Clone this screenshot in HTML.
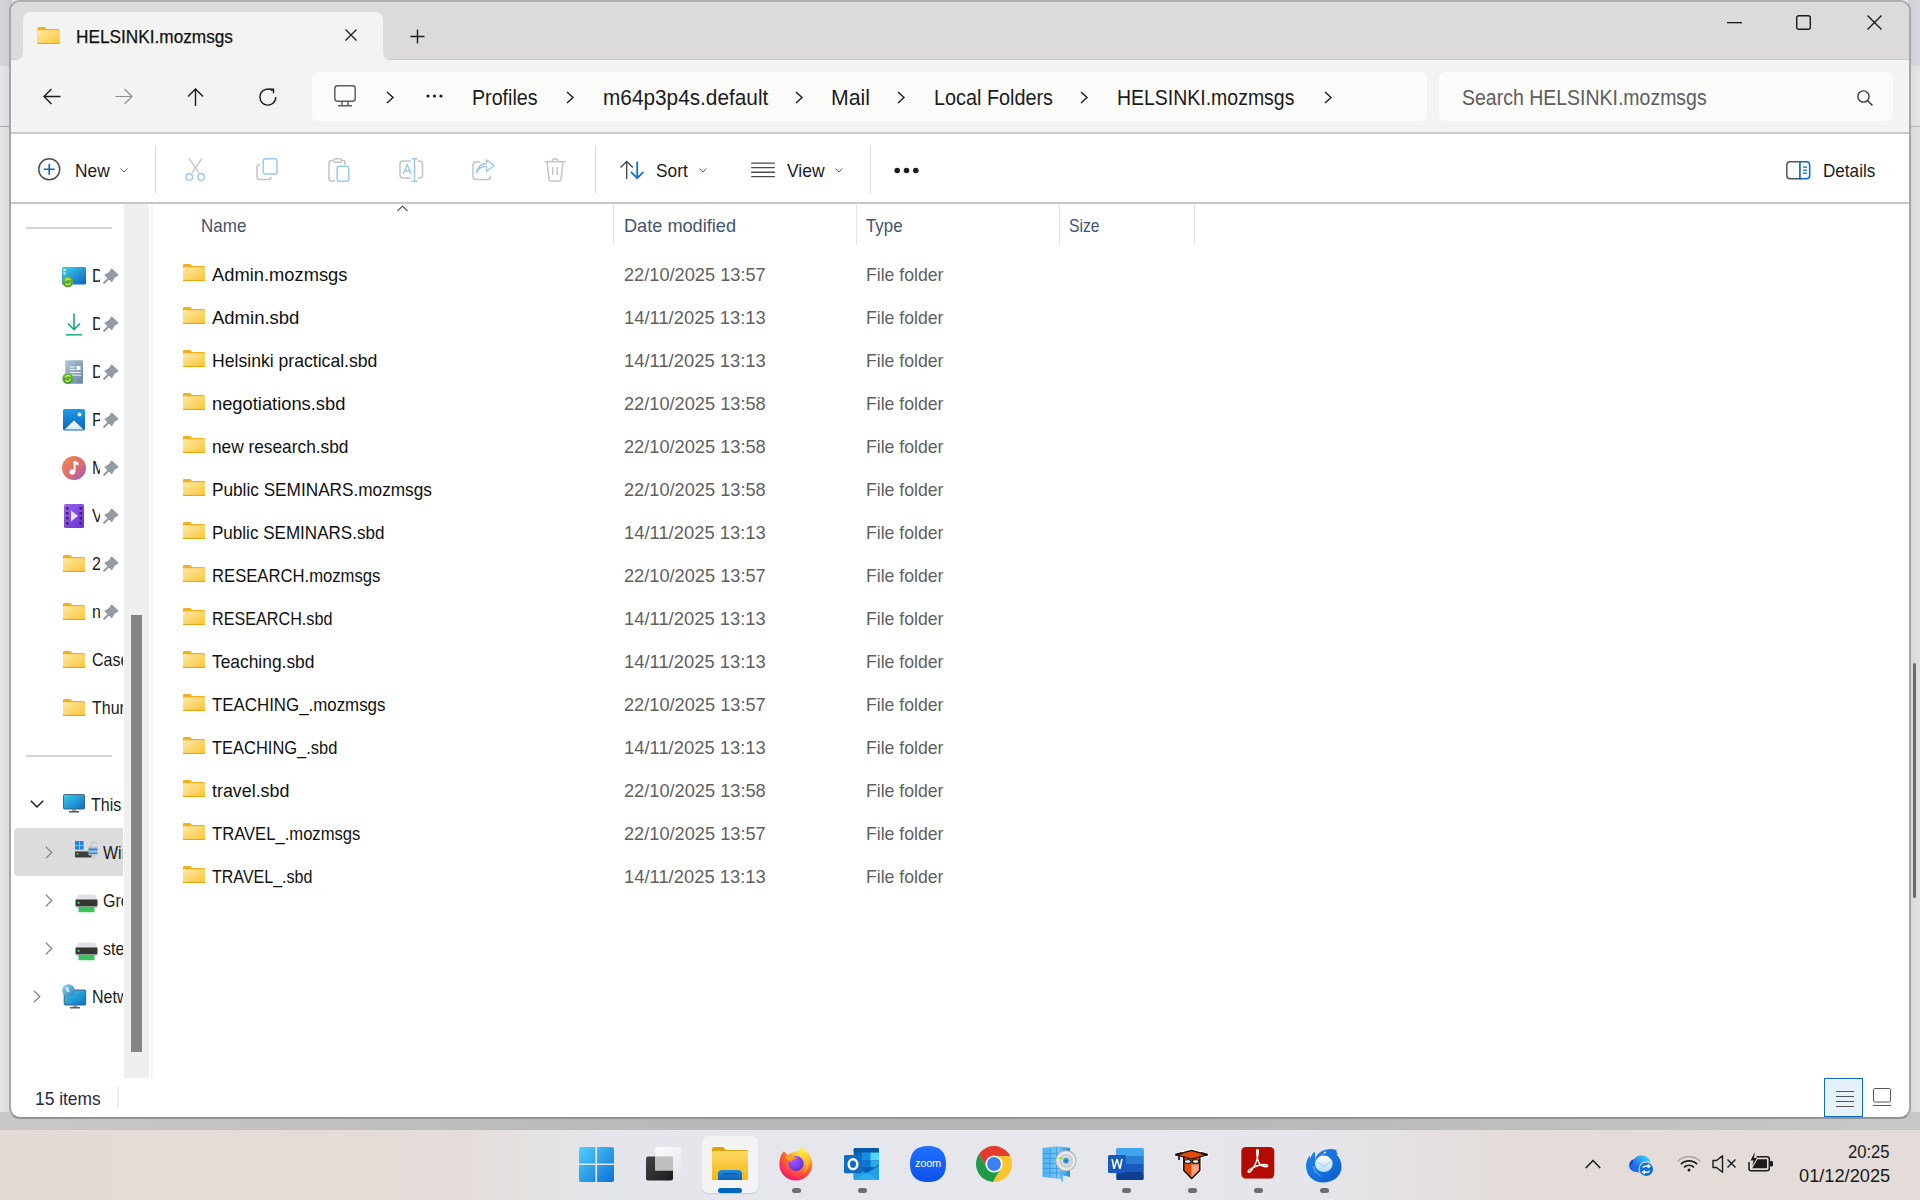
<!DOCTYPE html>
<html><head><meta charset="utf-8">
<style>
*{box-sizing:border-box;margin:0;padding:0}
html,body{width:1920px;height:1200px;overflow:hidden}
body{position:relative;font-family:"Liberation Sans",sans-serif;background:#e8e8ea;color:#1b1b1b}
.a{position:absolute}
.t{position:absolute;white-space:nowrap;line-height:1;transform-origin:0 0}
svg{position:absolute;overflow:visible}
#bgl{left:0;top:0;width:12px;height:1130px;background:linear-gradient(90deg,rgba(255,255,255,0.12),rgba(0,0,0,0.04)),linear-gradient(#d2d3d9 0,#d2d3d9 66px,#e1e2e6 66px,#e1e2e6 126px,#9f9fa3 126px,#9f9fa3 127px,#e2e2e2 127px)}
#bgr{left:1908px;top:0;width:12px;height:1130px;background:linear-gradient(90deg,rgba(0,0,0,0.04),rgba(255,255,255,0.1)),linear-gradient(#d5d6dc 0,#d5d6dc 66px,#e3e3e6 66px,#e3e3e6 126px,#b0b0b0 126px,#b0b0b0 127px,#dedede 127px)}
#bgt{display:none}
#bgb{left:0;top:1112px;width:1920px;height:18px;background:linear-gradient(90deg,#c8c8c8 0%,#bababa 30%,#b6b6b6 50%,#bababa 70%,#c8c8c8 100%)}
#win{left:9px;top:0;width:1902px;height:1119px;border-radius:11px;background:#fff;border:2px solid #a6a6a6;border-top-color:#adadb3;border-bottom-color:#939393}
#title{left:11px;top:2px;width:1898px;height:58px;background:#dcdbd9;border-radius:9px 9px 0 0;border-bottom:1px solid #c9c9c9}
#toolbar{left:11px;top:60px;width:1898px;height:74px;background:#f3f3f2;border-bottom:2px solid #cbcac7}
#tab{left:23px;top:12px;width:360px;height:49px;background:#f3f3f2;border-radius:8px 8px 0 0}
.flare{width:8px;height:8px;top:51px}
#addr{left:312px;top:72px;width:1115px;height:49px;background:#fbfbfa;border-radius:6px}
#search{left:1439px;top:72px;width:454px;height:49px;background:#fbfbfa;border-radius:6px}
#cmdline{left:11px;top:202px;width:1898px;height:2px;background:#c8c7c3}
#track{left:124px;top:204px;width:25px;height:874px;background:#efefef}
#thumb{left:131px;top:615px;width:11px;height:437px;background:#858585}
#cline{left:151px;top:204px;width:2px;height:874px;background:#f4f4f4}
.sep{width:1px;background:#dcdcdc}
.csep{width:1px;top:203px;height:42px;background:#e3e3e3}
#taskbar{left:0;top:1130px;width:1920px;height:70px;background:linear-gradient(90deg,#e4dbd6 0%,#e4dcd8 23%,#e5e6eb 32%,#e6e7ec 50%,#e5e5ea 68%,#e3dcd8 79%,#e3dcd8 100%);}
.dot{width:9px;height:5px;border-radius:3px;background:#6e6e6e;top:1188px}
</style></head>
<body>
<svg width="0" height="0" style="position:absolute"><defs>
<g id="pin"><path d="M1.2 14.8L5.8 10.2" stroke="#939ca3" stroke-width="2.2" stroke-linecap="round"/><path d="M9.6 0.9L15 6.3Q15.8 7.2 14.8 8L11.6 9.8L8.8 14.6L1.2 7.1L5.9 4.3L7.8 1.2Q8.6 0.2 9.6 0.9Z" fill="#939ca3"/></g>
<linearGradient id="fg2" x1="0" y1="0" x2="1" y2="1"><stop offset="0" stop-color="#ffe9a6"/><stop offset="1" stop-color="#fbc537"/></linearGradient>
<g id="fold"><path d="M0 1.3Q0 0 1.3 0H7.2L9.2 2H20.7Q22 2 22 3.3V15.7Q22 17 20.7 17H1.3Q0 17 0 15.7Z" fill="#f1b01c"/><rect x="0" y="3.2" width="22" height="13.8" rx="1.1" fill="url(#fg2)"/><rect x="0" y="15.9" width="22" height="1.1" fill="#eaa710"/></g>
<g id="drv"><path d="M3 0.5H20L22.5 6H0.5Z" fill="#e0e2e6"/><rect x="0.5" y="5.5" width="22" height="7" rx="1" fill="#353535"/><rect x="2.5" y="7.8" width="2" height="2" fill="#3de051"/><rect x="0.5" y="13" width="22" height="1.2" fill="#d9d9d9"/><rect x="3.5" y="12.8" width="16" height="5.5" rx="0.8" fill="#3ec45e"/></g>
</defs></svg>
<div id="bgl" class="a"></div>
<div id="bgr" class="a"></div>
<div id="bgt" class="a"></div>
<div id="bgb" class="a"></div>
<div class="a" style="left:1913px;top:663px;width:3px;height:235px;background:#6b6b6b;border-radius:2px"></div>
<div id="win" class="a"></div>
<div id="title" class="a"></div>
<div id="toolbar" class="a"></div>
<div id="tab" class="a"></div>
<!-- tab flares -->
<svg style="left:15px;top:52px" width="8" height="8"><path d="M0 8 Q8 8 8 0 V8 Z" fill="#f3f3f2"/></svg>
<svg style="left:383px;top:52px" width="8" height="8"><path d="M8 8 Q0 8 0 0 V8 Z" fill="#f3f3f2"/></svg>
<!-- tab folder icon -->
<svg style="left:37px;top:27px" width="23" height="17" viewBox="0 0 22 17"><defs><linearGradient id="fg" x1="0" y1="0" x2="1" y2="1"><stop offset="0" stop-color="#ffe9a6"/><stop offset="1" stop-color="#fbc537"/></linearGradient></defs><path d="M0 1.3Q0 0 1.3 0H7.2L9.2 2H20.7Q22 2 22 3.3V15.7Q22 17 20.7 17H1.3Q0 17 0 15.7Z" fill="#f1b01c"/><rect x="0" y="3.2" width="22" height="13.8" rx="1.1" fill="url(#fg)"/><rect x="0" y="15.9" width="22" height="1.1" fill="#eaa710"/></svg>
<!-- tab close / plus -->
<svg style="left:345px;top:29px" width="12" height="12"><path d="M0.5 0.5L11.5 11.5M11.5 0.5L0.5 11.5" stroke="#1e1e1e" stroke-width="1.3"/></svg>
<svg style="left:410px;top:29px" width="15" height="15"><path d="M7.5 0.5V14.5M0.5 7.5H14.5" stroke="#1e1e1e" stroke-width="1.4"/></svg>
<!-- window controls -->
<svg style="left:1727px;top:22px" width="15" height="2"><rect x="0" y="0" width="15" height="1.3" fill="#1b1b1b"/></svg>
<svg style="left:1796px;top:15px" width="15" height="15"><rect x="0.7" y="0.7" width="13.6" height="13.6" rx="2" fill="none" stroke="#1b1b1b" stroke-width="1.4"/></svg>
<svg style="left:1867px;top:15px" width="15" height="15"><path d="M0.5 0.5L14.5 14.5M14.5 0.5L0.5 14.5" stroke="#1b1b1b" stroke-width="1.4"/></svg>
<!-- nav arrows -->
<svg style="left:43px;top:88px" width="18" height="17"><path d="M17.5 8.5H1M8.5 1L1 8.5L8.5 16" fill="none" stroke="#1b1b1b" stroke-width="1.4"/></svg>
<svg style="left:115px;top:88px" width="18" height="17"><path d="M0.5 8.5H17M9.5 1L17 8.5L9.5 16" fill="none" stroke="#8e8e8e" stroke-width="1.2"/></svg>
<svg style="left:187px;top:88px" width="18" height="18"><path d="M8.5 18V1M1 8.5L8.5 1L16 8.5" fill="none" stroke="#1b1b1b" stroke-width="1.4"/></svg>
<svg style="left:259px;top:88px" width="18" height="18"><path d="M16.8 9A8 8 0 1 1 13.5 2.6" fill="none" stroke="#1b1b1b" stroke-width="1.4"/><path d="M10.5 1.3H14.5V5.3" fill="none" stroke="#1b1b1b" stroke-width="1.4"/></svg>
<div id="addr" class="a"></div>
<div id="search" class="a"></div>
<!-- PC icon -->
<svg style="left:334px;top:85px" width="22" height="22"><rect x="0.8" y="0.8" width="20.4" height="15.4" rx="2.6" fill="none" stroke="#5e5e5e" stroke-width="1.5"/><path d="M8 16.5V20M14 16.5V20M4 20.8H18" stroke="#5e5e5e" stroke-width="1.5"/></svg>
<!-- breadcrumb chevrons -->
<svg style="left:386px;top:91px" width="8" height="13"><path d="M1 1L7 6.5L1 12" fill="none" stroke="#1b1b1b" stroke-width="1.4"/></svg>
<svg style="left:426px;top:94px" width="17" height="4"><circle cx="2" cy="2" r="1.6" fill="#1b1b1b"/><circle cx="8.5" cy="2" r="1.6" fill="#1b1b1b"/><circle cx="15" cy="2" r="1.6" fill="#1b1b1b"/></svg>
<svg style="left:566px;top:91px" width="8" height="13"><path d="M1 1L7 6.5L1 12" fill="none" stroke="#1b1b1b" stroke-width="1.4"/></svg>
<svg style="left:795px;top:91px" width="8" height="13"><path d="M1 1L7 6.5L1 12" fill="none" stroke="#1b1b1b" stroke-width="1.4"/></svg>
<svg style="left:897px;top:91px" width="8" height="13"><path d="M1 1L7 6.5L1 12" fill="none" stroke="#1b1b1b" stroke-width="1.4"/></svg>
<svg style="left:1080px;top:91px" width="8" height="13"><path d="M1 1L7 6.5L1 12" fill="none" stroke="#1b1b1b" stroke-width="1.4"/></svg>
<svg style="left:1324px;top:91px" width="8" height="13"><path d="M1 1L7 6.5L1 12" fill="none" stroke="#1b1b1b" stroke-width="1.4"/></svg>
<!-- search icon -->
<svg style="left:1857px;top:90px" width="16" height="16"><circle cx="6.5" cy="6.5" r="5.6" fill="none" stroke="#3a3a3a" stroke-width="1.4"/><path d="M10.5 10.5L15.5 15.5" stroke="#3a3a3a" stroke-width="1.5"/></svg>
<!-- command bar -->
<svg style="left:38px;top:158px" width="23" height="23"><circle cx="11.25" cy="11.25" r="10.5" fill="none" stroke="#505050" stroke-width="1.5"/><path d="M11.25 5.8V16.7M5.8 11.25H16.7" stroke="#0f6cbd" stroke-width="1.7"/></svg>
<svg style="left:120px;top:168px" width="8" height="5"><path d="M0.5 0.5L4 4L7.5 0.5" fill="none" stroke="#5a5a5a" stroke-width="1"/></svg>
<div class="a sep" style="left:155px;top:146px;height:47px"></div>
<!-- cut -->
<svg style="left:185px;top:158px" width="21" height="24"><path d="M4 0.5L14 15M17 0.5L7 15" stroke="#bdbdbd" stroke-width="1.3" fill="none"/><circle cx="4.3" cy="19" r="3.3" fill="none" stroke="#9bc9ee" stroke-width="1.5"/><circle cx="16.2" cy="19" r="3.3" fill="none" stroke="#9bc9ee" stroke-width="1.5"/></svg>
<!-- copy -->
<svg style="left:256px;top:158px" width="22" height="23"><path d="M4 6.5Q1 6.5 1 9.5V18.5Q1 21.5 4 21.5H12.5Q15 21.5 15 19" fill="none" stroke="#c4c4c4" stroke-width="1.5"/><rect x="7.2" y="0.8" width="13.8" height="15.2" rx="2.6" fill="none" stroke="#9bc9ee" stroke-width="1.5"/></svg>
<!-- paste -->
<svg style="left:328px;top:158px" width="22" height="24"><path d="M5 2.5H3.2Q1 2.5 1 4.7V20.8Q1 23 3.2 23H7" fill="none" stroke="#c4c4c4" stroke-width="1.5"/><path d="M13 2.5H15Q17 2.5 17 4.5V7" fill="none" stroke="#c4c4c4" stroke-width="1.5"/><rect x="5.5" y="0.8" width="8" height="3.5" rx="1.7" fill="none" stroke="#c4c4c4" stroke-width="1.4"/><rect x="9.2" y="8.2" width="11.5" height="15" rx="2.2" fill="none" stroke="#9bc9ee" stroke-width="1.5"/></svg>
<!-- rename -->
<svg style="left:399px;top:158px" width="25" height="24"><path d="M12 3H4Q1 3 1 6V17Q1 20 4 20H12M19 3H20.5Q23.5 3 23.5 6V17Q23.5 20 20.5 20H19" fill="none" stroke="#c4c4c4" stroke-width="1.5"/><path d="M15.5 1V23M12.5 0.8H18.5M12.5 23.2H18.5" stroke="#9bc9ee" stroke-width="1.5"/><path d="M4.2 16L8.2 6.5L12.2 16M5.5 13H10.9" fill="none" stroke="#9bc9ee" stroke-width="1.4"/></svg>
<!-- share -->
<svg style="left:472px;top:159px" width="23" height="22"><path d="M8 3H4Q1 3 1 6V17.5Q1 20.5 4 20.5H15.5Q18.5 20.5 18.5 17.5V16.5" fill="none" stroke="#c4c4c4" stroke-width="1.5"/><path d="M4.5 14Q7 7 14.5 7.5V12.5L22 6.5L14.5 0.8V4.5Q6 5 4.5 14Z" fill="none" stroke="#9bc9ee" stroke-width="1.4" stroke-linejoin="round"/></svg>
<!-- delete -->
<svg style="left:544px;top:158px" width="22" height="24"><path d="M0.5 3.8H21.5M3 4L5 21Q5.3 23 7.3 23H14.7Q16.7 23 17 21L19 4M8 3.5Q8 0.8 11 0.8Q14 0.8 14 3.5M8.7 9V17M13.3 9V17" fill="none" stroke="#c4c4c4" stroke-width="1.5"/></svg>
<div class="a sep" style="left:595px;top:146px;height:47px"></div>
<!-- sort -->
<svg style="left:620px;top:161px" width="25" height="19"><path d="M6.7 18V0.8M0.5 6.5L6.7 0.5L12.9 6.5" fill="none" stroke="#4a4a4a" stroke-width="1.4"/><path d="M17.2 0.5V17.5M11 10.8L17.2 17.2L23.4 10.8" fill="none" stroke="#0f74d0" stroke-width="1.8"/></svg>
<svg style="left:699px;top:168px" width="8" height="5"><path d="M0.5 0.5L4 4L7.5 0.5" fill="none" stroke="#5a5a5a" stroke-width="1"/></svg>
<!-- view -->
<svg style="left:751px;top:161px" width="24" height="17"><path d="M0.7 2.1H23.3M0.7 6.6H23.3M0.7 11.2H23.3M0.7 15.6H23.3" stroke="#4a4a4a" stroke-width="1.4" stroke-linecap="round"/></svg>
<svg style="left:835px;top:168px" width="8" height="5"><path d="M0.5 0.5L4 4L7.5 0.5" fill="none" stroke="#5a5a5a" stroke-width="1"/></svg>
<div class="a sep" style="left:870px;top:146px;height:47px"></div>
<svg style="left:894px;top:167px" width="26" height="7"><circle cx="3.2" cy="3.5" r="2.8" fill="#1b1b1b"/><circle cx="12.5" cy="3.5" r="2.8" fill="#1b1b1b"/><circle cx="21.8" cy="3.5" r="2.8" fill="#1b1b1b"/></svg>
<!-- details icon -->
<svg style="left:1786px;top:161px" width="25" height="19"><path d="M14 0.8H4Q0.8 0.8 0.8 4V14.5Q0.8 17.7 4 17.7H14Z" fill="#fafafa" stroke="#555" stroke-width="1.5"/><path d="M14 0.8H20.5Q23.7 0.8 23.7 4V14.5Q23.7 17.7 20.5 17.7H14Z" fill="#fafafa" stroke="#0f6cbd" stroke-width="1.5"/><path d="M17 6.2H21M17 9.2H21M17 12.2H21" stroke="#0f6cbd" stroke-width="1.3"/></svg>
<div id="cmdline" class="a"></div>

<!-- NAV PANE -->
<div class="a" style="left:26px;top:227px;width:86px;height:2px;background:#d6d6d6"></div>
<div class="a" style="left:26px;top:755px;width:86px;height:2px;background:#d6d6d6"></div>
<div id="track" class="a"></div>
<div id="thumb" class="a"></div>
<div id="cline" class="a"></div>
<!-- desktop icon -->
<svg style="left:62px;top:267px" width="24" height="19"><defs><linearGradient id="dk" x1="0" y1="0" x2="1" y2="1"><stop offset="0" stop-color="#3fd0e8"/><stop offset="1" stop-color="#0b62c4"/></linearGradient><linearGradient id="sy" x1="0" y1="0" x2="0" y2="1"><stop offset="0" stop-color="#6cc04a"/><stop offset="1" stop-color="#3f9a3a"/></linearGradient></defs><rect x="0" y="0" width="24" height="17.5" rx="1.5" fill="url(#dk)"/><rect x="1.6" y="2" width="2" height="2" fill="#fff"/><rect x="1.6" y="5.5" width="2" height="2" fill="#fff"/><circle cx="5.8" cy="14.8" r="5.5" fill="url(#sy)"/><path d="M3.5 14A2.5 2.5 0 0 1 8 13M8.2 15.6A2.5 2.5 0 0 1 3.6 16.6" stroke="#f3e23c" stroke-width="1.3" fill="none"/></svg>
<!-- downloads -->
<svg style="left:66px;top:313px" width="17" height="23"><path d="M8 0.5V16.5M2 10.5L8 16.5L14 10.5" fill="none" stroke="#1aa38a" stroke-width="1.6"/><rect x="0" y="21" width="16" height="1.6" fill="#22b48c"/></svg>
<!-- documents -->
<svg style="left:62px;top:360px" width="24" height="25"><defs><linearGradient id="dc" x1="0" y1="0" x2="1" y2="1"><stop offset="0" stop-color="#b3c4d8"/><stop offset="1" stop-color="#6886a8"/></linearGradient></defs><rect x="3.2" y="0.3" width="17.8" height="23.5" rx="1.3" fill="url(#dc)"/><path d="M8 7H13M8 9.5H13M8 12.5H19M8 15.2H19" stroke="#fff" stroke-width="0.9"/><rect x="14.5" y="6" width="4" height="4" fill="#fff"/><circle cx="5.8" cy="18.4" r="5.5" fill="url(#sy)"/><path d="M3.5 17.6A2.5 2.5 0 0 1 8 16.6M8.2 19.2A2.5 2.5 0 0 1 3.6 20.2" stroke="#f3e23c" stroke-width="1.3" fill="none"/></svg>
<!-- pictures -->
<svg style="left:63px;top:409px" width="23" height="22"><defs><linearGradient id="pc" x1="0" y1="0" x2="0" y2="1"><stop offset="0" stop-color="#1f9ae6"/><stop offset="1" stop-color="#0c63bb"/></linearGradient><linearGradient id="pm" x1="0" y1="0" x2="0" y2="1"><stop offset="0" stop-color="#ffffff"/><stop offset="1" stop-color="#d5e9f9"/></linearGradient></defs><rect x="0" y="0" width="22" height="21.5" rx="1.8" fill="url(#pc)"/><path d="M1.5 20.5L11 11.5L20.5 20.5Z" fill="url(#pm)"/><circle cx="16.5" cy="5.5" r="1.9" fill="#fff"/></svg>
<!-- music -->
<svg style="left:62px;top:456px" width="24" height="24"><defs><linearGradient id="mu" x1="0" y1="0" x2="1" y2="1"><stop offset="0" stop-color="#f28c49"/><stop offset="0.55" stop-color="#dc6b72"/><stop offset="1" stop-color="#9a5bc7"/></linearGradient></defs><circle cx="12" cy="12" r="12" fill="url(#mu)"/><path d="M12.6 5V15.5" stroke="#fff" stroke-width="2"/><path d="M12.6 5L16.5 6.5V9.5L12.6 8Z" fill="#fff"/><circle cx="10.2" cy="16" r="2.8" fill="#fff"/></svg>
<!-- videos -->
<svg style="left:64px;top:504px" width="20" height="24"><defs><linearGradient id="vi" x1="0" y1="0" x2="1" y2="1"><stop offset="0" stop-color="#9c63ec"/><stop offset="1" stop-color="#6a31d2"/></linearGradient></defs><rect x="0" y="0" width="20" height="24" rx="1.5" fill="url(#vi)"/><g fill="#3c2270"><rect x="2" y="3" width="2.5" height="2.5"/><rect x="2" y="8" width="2.5" height="2.5"/><rect x="2" y="13" width="2.5" height="2.5"/><rect x="2" y="18" width="2.5" height="2.5"/><rect x="15.5" y="3" width="2.5" height="2.5"/><rect x="15.5" y="8" width="2.5" height="2.5"/><rect x="15.5" y="13" width="2.5" height="2.5"/><rect x="15.5" y="18" width="2.5" height="2.5"/></g><path d="M7 6.5L14 12L7 17.5Z" fill="#e6e0f2"/></svg>
<!-- pins -->
<svg style="left:103px;top:268px" width="16" height="16"><use href="#pin"/></svg>

<!-- more pins -->
<svg style="left:103px;top:316px" width="16" height="16"><use href="#pin"/></svg>
<svg style="left:103px;top:364px" width="16" height="16"><use href="#pin"/></svg>
<svg style="left:103px;top:412px" width="16" height="16"><use href="#pin"/></svg>
<svg style="left:103px;top:460px" width="16" height="16"><use href="#pin"/></svg>
<svg style="left:103px;top:508px" width="16" height="16"><use href="#pin"/></svg>
<svg style="left:103px;top:556px" width="16" height="16"><use href="#pin"/></svg>
<svg style="left:103px;top:604px" width="16" height="16"><use href="#pin"/></svg>
<!-- nav folders -->
<svg style="left:63px;top:555px" width="22" height="17"><use href="#fold"/></svg>
<svg style="left:63px;top:603px" width="22" height="17"><use href="#fold"/></svg>
<svg style="left:63px;top:651px" width="22" height="17"><use href="#fold"/></svg>
<svg style="left:63px;top:699px" width="22" height="17"><use href="#fold"/></svg>
<!-- This PC -->
<svg style="left:30px;top:800px" width="14" height="8"><path d="M0.8 0.8L7 7L13.2 0.8" fill="none" stroke="#1b1b1b" stroke-width="1.4"/></svg>
<svg style="left:63px;top:794px" width="22" height="19"><defs><linearGradient id="mon" x1="0" y1="0" x2="1" y2="1"><stop offset="0" stop-color="#3ad0e6"/><stop offset="1" stop-color="#0d6bc7"/></linearGradient></defs><rect x="0.5" y="0.5" width="21" height="14.5" rx="1" fill="url(#mon)" stroke="#3f5a70" stroke-width="0.9"/><rect x="9" y="15" width="4" height="2" fill="#8a9aa6"/><rect x="6" y="17" width="10" height="1.6" fill="#56646e"/></svg>
<div class="a" style="left:14px;top:828px;width:109px;height:48px;background:#dcdcdc;border-radius:4px 0 0 4px"></div>
<svg style="left:45px;top:846px" width="8" height="13"><path d="M0.8 0.8L6.8 6.5L0.8 12.2" fill="none" stroke="#888" stroke-width="1.3"/></svg>
<svg style="left:45px;top:894px" width="8" height="13"><path d="M0.8 0.8L6.8 6.5L0.8 12.2" fill="none" stroke="#888" stroke-width="1.3"/></svg>
<svg style="left:45px;top:942px" width="8" height="13"><path d="M0.8 0.8L6.8 6.5L0.8 12.2" fill="none" stroke="#888" stroke-width="1.3"/></svg>
<svg style="left:33px;top:990px" width="8" height="13"><path d="M0.8 0.8L6.8 6.5L0.8 12.2" fill="none" stroke="#888" stroke-width="1.3"/></svg>
<!-- windows drive -->
<svg style="left:75px;top:841px" width="23" height="19"><g fill="#1e86de"><rect x="0" y="0" width="4" height="4"/><rect x="4.6" y="0" width="4" height="4"/><rect x="0" y="4.6" width="4" height="4"/><rect x="4.6" y="4.6" width="4" height="4"/></g><rect x="0" y="10" width="17" height="6.5" rx="0.8" fill="#3d3d3d"/><rect x="0" y="9" width="17" height="1.4" fill="#d8d8d8"/><rect x="1.6" y="12" width="1.8" height="1.8" fill="#34e04a"/><path d="M16 6V3.8A2.8 2.8 0 0 1 21.6 3.8" fill="none" stroke="#b8c6d2" stroke-width="1.2"/><rect x="13.5" y="5.5" width="9" height="9" rx="1" fill="#b9c1c8"/><rect x="13.5" y="7.5" width="9" height="2" fill="#2a8ae0"/><rect x="13.5" y="11.5" width="9" height="1.5" fill="#2a8ae0"/><ellipse cx="18" cy="16.5" rx="2.5" ry="1.6" fill="#c9d0d6"/></svg>
<!-- network drives -->
<svg style="left:75px;top:894px" width="23" height="19"><use href="#drv"/></svg>
<svg style="left:75px;top:942px" width="23" height="19"><use href="#drv"/></svg>
<!-- network -->
<svg style="left:62px;top:984px" width="25" height="25"><defs><linearGradient id="gl" x1="0" y1="0" x2="1" y2="1"><stop offset="0" stop-color="#8fd2f4"/><stop offset="1" stop-color="#2f7fb8"/></linearGradient></defs><rect x="2.2" y="6" width="21.5" height="15" rx="0.8" fill="url(#mon)" stroke="#3f5a70" stroke-width="0.9"/><rect x="11" y="21" width="4" height="2" fill="#8a9aa6"/><rect x="8" y="23" width="10" height="1.5" fill="#56646e"/><circle cx="6.5" cy="6.5" r="6.3" fill="url(#gl)"/><path d="M3 4Q5 2 7 4Q6 6 8 7Q7 9 5 8Z" fill="#d8f0fb" opacity="0.8"/></svg>
<!-- row folders -->
<svg style="left:183px;top:264px" width="22" height="17"><use href="#fold"/></svg>
<svg style="left:183px;top:307px" width="22" height="17"><use href="#fold"/></svg>
<svg style="left:183px;top:350px" width="22" height="17"><use href="#fold"/></svg>
<svg style="left:183px;top:393px" width="22" height="17"><use href="#fold"/></svg>
<svg style="left:183px;top:436px" width="22" height="17"><use href="#fold"/></svg>
<svg style="left:183px;top:479px" width="22" height="17"><use href="#fold"/></svg>
<svg style="left:183px;top:522px" width="22" height="17"><use href="#fold"/></svg>
<svg style="left:183px;top:565px" width="22" height="17"><use href="#fold"/></svg>
<svg style="left:183px;top:608px" width="22" height="17"><use href="#fold"/></svg>
<svg style="left:183px;top:651px" width="22" height="17"><use href="#fold"/></svg>
<svg style="left:183px;top:694px" width="22" height="17"><use href="#fold"/></svg>
<svg style="left:183px;top:737px" width="22" height="17"><use href="#fold"/></svg>
<svg style="left:183px;top:780px" width="22" height="17"><use href="#fold"/></svg>
<svg style="left:183px;top:823px" width="22" height="17"><use href="#fold"/></svg>
<svg style="left:183px;top:866px" width="22" height="17"><use href="#fold"/></svg>
<!-- column header -->
<svg style="left:397px;top:205px" width="11" height="7"><path d="M0.5 6L5.5 1L10.5 6" fill="none" stroke="#5a5a5a" stroke-width="1.1"/></svg>
<div class="a csep" style="left:613px"></div>
<div class="a csep" style="left:856px"></div>
<div class="a csep" style="left:1059px"></div>
<div class="a csep" style="left:1194px"></div>
<!-- status -->
<div class="a" style="left:117px;top:1087px;width:2px;height:21px;background:#efefef"></div>
<div class="a" style="left:1824px;top:1078px;width:39px;height:39px;background:#e5f1fb;border:1.5px solid #0f6cbd"></div>
<svg style="left:1836px;top:1090px" width="18" height="18"><path d="M0 1.5H18M0 6.5H18M0 11.5H18M0 16.5H18" stroke="#555" stroke-width="1"/></svg>
<svg style="left:1873px;top:1088px" width="19" height="18"><rect x="0.5" y="0.5" width="17" height="13.5" rx="1.2" fill="none" stroke="#555" stroke-width="1"/><path d="M0 17.5H18" stroke="#555" stroke-width="1"/></svg>
<!-- TASKBAR -->
<div id="taskbar" class="a"></div>
<!-- start -->
<svg style="left:579px;top:1147px" width="35" height="35"><defs><linearGradient id="st" x1="0" y1="0" x2="1" y2="1"><stop offset="0" stop-color="#52d0fb"/><stop offset="1" stop-color="#0a6fd6"/></linearGradient></defs><path d="M0 2Q0 0 2 0H16.4V16.4H0ZM18.1 0H33Q35 0 35 2V16.4H18.1ZM0 18.1H16.4V35H2Q0 35 0 33ZM18.1 18.1H35V33Q35 35 33 35H18.1Z" fill="url(#st)"/></svg>
<!-- task view -->
<svg style="left:646px;top:1147px" width="36" height="34"><defs><linearGradient id="tv1" x1="0" y1="0" x2="1" y2="1"><stop offset="0" stop-color="#444"/><stop offset="1" stop-color="#1b1b1b"/></linearGradient><linearGradient id="tv2" x1="0" y1="0" x2="1" y2="1"><stop offset="0" stop-color="#ffffff"/><stop offset="1" stop-color="#e9e9e9"/></linearGradient></defs><rect x="0" y="9.5" width="27" height="24" rx="2" fill="url(#tv1)"/><rect x="9" y="0" width="26.5" height="23.5" rx="1.5" fill="url(#tv2)" opacity="0.85"/><rect x="9" y="9.5" width="18" height="14" fill="#bdbdbd" opacity="0.9"/></svg>
<!-- explorer active -->
<div class="a" style="left:702px;top:1136px;width:56px;height:57px;background:#f3f3f3;border-radius:6px;box-shadow:0 1px 1px rgba(0,0,0,0.12)"></div>
<svg style="left:712px;top:1147px" width="36" height="34"><defs><linearGradient id="ef" x1="0" y1="0" x2="0" y2="1"><stop offset="0" stop-color="#ffd963"/><stop offset="1" stop-color="#f5b614"/></linearGradient><linearGradient id="ed" x1="0" y1="0" x2="0" y2="1"><stop offset="0" stop-color="#1b8ee6"/><stop offset="1" stop-color="#0b5fb8"/></linearGradient></defs><path d="M0 2Q0 0 2 0H11L14 3H34Q36 3 36 5V31Q36 33 34 33H2Q0 33 0 31Z" fill="#dfa20a"/><rect x="0" y="4" width="36" height="29" rx="1.5" fill="url(#ef)"/><path d="M6 33V27Q6 23 10 23H26Q30 23 30 27V33Z" fill="url(#ed)"/><rect x="11" y="26.2" width="14" height="1.2" fill="#0b4d91"/></svg>
<div class="a" style="left:718px;top:1188px;width:24px;height:5px;border-radius:3px;background:#0067c0"></div>
<!-- firefox -->
<svg style="left:779px;top:1146px" width="34" height="35"><defs><radialGradient id="ff1" cx="0.72" cy="0.12" r="0.95"><stop offset="0" stop-color="#fff44f"/><stop offset="0.35" stop-color="#ffbd2e"/><stop offset="0.6" stop-color="#ff6a2a"/><stop offset="0.85" stop-color="#ff3350"/><stop offset="1" stop-color="#e3197e"/></radialGradient><radialGradient id="ff2" cx="0.35" cy="0.3" r="0.8"><stop offset="0" stop-color="#a659ff"/><stop offset="0.6" stop-color="#7b3cf0"/><stop offset="1" stop-color="#5a2bc4"/></radialGradient></defs><path d="M4.5 5.5C2 8.5 0.3 13 0.3 18C0.3 27 7.5 34.5 16.8 34.5C26 34.5 33.3 27 33.3 18C33.3 11.5 29.5 6 24.5 3C23.5 2 23 1 22.5 0C21.5 3 19.5 5 16.5 5.6C13 6.3 10.5 7.8 8.5 9.8C8 8 6.8 6.5 4.5 5.5Z" fill="url(#ff1)"/><circle cx="17" cy="17.5" r="7.6" fill="url(#ff2)"/><path d="M5.5 11.5Q10 8.8 15 11Q17.5 12 19.5 11Q17 13.5 13.5 13.8Q12.2 14.8 12.4 16.2Q8.5 15 5.5 11.5Z" fill="#ff9f1c"/><path d="M22 5.5Q29.5 9 29.8 17.5Q29.5 25.5 22 28.5Q27.3 24 27.2 17.5Q27 10.5 22 5.5Z" fill="#ffd23a" opacity="0.55"/></svg>
<div class="a dot" style="left:792px"></div>
<!-- outlook -->
<svg style="left:844px;top:1148px" width="36" height="33"><rect x="9.7" y="0" width="25.3" height="32" rx="1.6" fill="#0a64b8"/><rect x="9.7" y="0" width="25.3" height="4.6" rx="1.5" fill="#0358a7"/><rect x="18" y="4.6" width="8.5" height="7.6" fill="#1a8ee0"/><rect x="26.5" y="4.6" width="8.5" height="7.6" fill="#50d9ff"/><rect x="9.7" y="12.2" width="8.3" height="7" fill="#0a64b8"/><rect x="18" y="12.2" width="8.5" height="7" fill="#0f78d4"/><rect x="26.5" y="12.2" width="8.5" height="7" fill="#28a8ea"/><path d="M18 19L22.5 24L35 16.5V19Z" fill="#0a5cb0"/><path d="M9.7 17.5L22.3 25.5L35 17.5V30.4Q35 32 33.4 32H11.3Q9.7 32 9.7 30.4Z" fill="#1f9fe8"/><path d="M9.7 32L22.3 25L35 32Z" fill="#35b1f0" opacity="0.7"/><rect x="0" y="7" width="18" height="18.3" rx="1.6" fill="#0e6cc4"/><ellipse cx="9" cy="16.2" rx="4.3" ry="4.9" fill="none" stroke="#fff" stroke-width="2.5"/></svg>
<div class="a dot" style="left:858px"></div>
<!-- zoom -->
<svg style="left:910px;top:1146px" width="36" height="36"><defs><linearGradient id="zm" x1="0" y1="0" x2="0" y2="1"><stop offset="0" stop-color="#2170ff"/><stop offset="1" stop-color="#0b50e8"/></linearGradient></defs><path d="M18 0C30 0 36 6 36 18C36 30 30 36 18 36C6 36 0 30 0 18C0 6 6 0 18 0Z" fill="url(#zm)"/><text x="18" y="21.3" text-anchor="middle" font-family="Liberation Sans" font-size="11" fill="#fff" letter-spacing="-0.2">zoom</text></svg>
<!-- chrome -->
<svg style="left:976px;top:1146px" width="36" height="36" viewBox="0 0 36 36"><path d="M18 10L34.12 10A18 18 0 0 0 3.01 8.04L11.07 22Z" fill="#e33b2e"/><path d="M24.93 22L16.87 35.96A18 18 0 0 0 34.12 10L18 10Z" fill="#fcc52f"/><path d="M11.07 22L3.01 8.04A18 18 0 0 0 16.87 35.96L24.93 22Z" fill="#1e9a49"/><circle cx="18" cy="18" r="8.6" fill="#fff"/><circle cx="18" cy="18" r="6.9" fill="#3b7ff0"/></svg>
<!-- install disc -->
<svg style="left:1042px;top:1146px" width="36" height="36"><defs><linearGradient id="bl" x1="0" y1="0" x2="1" y2="0"><stop offset="0" stop-color="#4fb0ee"/><stop offset="0.6" stop-color="#77c6f6"/><stop offset="1" stop-color="#1d8fe0"/></linearGradient><radialGradient id="cd" cx="0.5" cy="0.5" r="0.5"><stop offset="0" stop-color="#fff"/><stop offset="0.28" stop-color="#e8e8e8"/><stop offset="0.55" stop-color="#c9c9c9"/><stop offset="0.8" stop-color="#f2f2f2"/><stop offset="1" stop-color="#a3a3a3"/></radialGradient></defs><path d="M0.5 2L16 0.3L28 2V31L21 29.5V35.8L19.5 35.8V33L0.5 31Z" fill="url(#bl)"/><path d="M1.5 7.5H20M1.5 12.5H20M1.5 17.5H20M1.5 22.5H20M1.5 27H20M8 2V31M14.5 1V32" stroke="#1f86d9" stroke-width="0.7" opacity="0.8"/><circle cx="24" cy="14.8" r="10.6" fill="url(#cd)"/><circle cx="24" cy="14.8" r="3" fill="#3d9ad8"/><circle cx="24" cy="14.8" r="1.2" fill="#1170c0"/><path d="M14.5 12L20.5 13.5L21 11.5Z" fill="#8fe83a"/></svg>
<!-- word -->
<svg style="left:1108px;top:1148px" width="36" height="32"><rect x="8.5" y="0" width="27" height="32" rx="1.5" fill="#185abd"/><rect x="8.5" y="0" width="27" height="8" rx="1.5" fill="#41a5ee"/><rect x="8.5" y="8" width="27" height="8" fill="#2b7cd3"/><rect x="8.5" y="16" width="27" height="8" fill="#185abd"/><rect x="8.5" y="24" width="27" height="8" rx="1.5" fill="#103f91"/><rect x="0" y="7" width="18" height="18" rx="1.5" fill="#185abd"/><path d="M3.3 11L5.3 21H6.8L9 13.8L11.2 21H12.7L14.7 11H13.1L11.8 18L9.8 11H8.2L6.2 18L4.9 11Z" fill="#fff"/></svg>
<div class="a dot" style="left:1122px"></div>
<!-- owl shield -->
<svg style="left:1174px;top:1149px" width="35" height="32"><g stroke="#fff" stroke-width="3" stroke-linejoin="round" fill="#fff"><path d="M1.5 5.8L17.5 1.3L33.5 5.8L26.5 7.6V21L17.5 30L9.8 21V7.6Z"/></g><path d="M9.8 8V21.5L17.5 29.6L25.8 21.5V8Z" fill="#e5480b" stroke="#111" stroke-width="1.5" stroke-linejoin="round"/><path d="M17.5 15.5V28.5L24.8 21V15.5Z" fill="#f3a586"/><path d="M1.5 5.8L17.5 1.3L33.5 5.8L17.5 10Z" fill="#e5480b" stroke="#111" stroke-width="1.2" stroke-linejoin="round"/><path d="M1.5 5.8L8 4M33.5 5.8L27 4" stroke="#111" stroke-width="2"/><path d="M5 6.5V11" stroke="#111" stroke-width="1.6"/><ellipse cx="13.6" cy="12.5" rx="3.4" ry="1.8" fill="#fff" stroke="#111" stroke-width="1.1"/><ellipse cx="21.6" cy="12.5" rx="3.4" ry="1.8" fill="#fff" stroke="#111" stroke-width="1.1"/></svg>
<div class="a dot" style="left:1188px"></div>
<!-- acrobat -->
<svg style="left:1241px;top:1147px" width="34" height="33"><rect x="0.3" y="0" width="33" height="31.5" rx="4.5" fill="#b30b00"/><rect x="0.3" y="31" width="33" height="1.2" rx="0.6" fill="#000" opacity="0.08"/><g fill="none" stroke="#fff" stroke-width="1.4" stroke-linejoin="round"><path d="M15.8 5.8Q15.5 2.5 16.5 2.5Q17.6 2.5 17.2 6.5Q16.8 10 15.2 15Q13 20 10.5 23.5Q8.5 26 7.2 25Q6.5 24 9.5 22Q13 19.5 19 18Q24 17 26 18Q27.5 19.2 26 19.6Q24 20 20.5 18.5Q17.5 16.5 16.3 11Q15.9 8 15.8 5.8Z"/></g></svg>
<div class="a dot" style="left:1254px"></div>
<!-- thunderbird -->
<svg style="left:1305px;top:1147px" width="38" height="36"><defs><linearGradient id="tb" x1="0" y1="0" x2="1" y2="1"><stop offset="0" stop-color="#1f86ea"/><stop offset="1" stop-color="#0b5ccc"/></linearGradient><linearGradient id="tbe" x1="0" y1="0" x2="0" y2="1"><stop offset="0" stop-color="#ffffff"/><stop offset="1" stop-color="#b3dcfb"/></linearGradient></defs><path d="M18 35.5C8 35.5 1 28 1 19C1 14 3 10.5 5 8.5L5.5 12C6 9 7.5 6 9.5 4.5C10.5 8 10.5 11 10 13C11.5 8 14 5 18 3.5C22 2 26 1.5 30 2.5L32 3.5L31 5L33 6.5L31.5 7.5C35 11 36.5 15 36.5 20C36.5 29 28.5 35.5 18 35.5Z" fill="url(#tb)"/><path d="M13 13Q15 7 21 5Q17 9 15 12Z" fill="#9a7df0" opacity="0.8"/><ellipse cx="18.8" cy="16.8" rx="8.8" ry="8.3" fill="url(#tbe)"/><path d="M11 14L18.8 19.5L26.5 14" fill="none" stroke="#a9cdee" stroke-width="1"/><circle cx="19.8" cy="5.5" r="0.9" fill="#fff"/><path d="M7 19Q8.5 28 18 30Q11 27 10 19Z" fill="#5fa8f5" opacity="0.6"/></svg>
<div class="a dot" style="left:1320px"></div>
<!-- tray -->
<svg style="left:1585px;top:1159px" width="16" height="10"><path d="M0.8 9L8 1.5L15.2 9" fill="none" stroke="#1b1b1b" stroke-width="1.5"/></svg>
<svg style="left:1628px;top:1154px" width="28" height="24"><defs><linearGradient id="od" x1="0.1" y1="0.9" x2="0.9" y2="0.1"><stop offset="0" stop-color="#1b5fe6"/><stop offset="0.5" stop-color="#2a93f6"/><stop offset="1" stop-color="#29d3ef"/></linearGradient></defs><circle cx="7.5" cy="11.3" r="6.4" fill="#1a46cc"/><circle cx="13.6" cy="10.2" r="9" fill="url(#od)"/><path d="M2 13Q4 17.5 8 17.5H13V11H2Z" fill="#1f6ae6"/><circle cx="18.3" cy="15.2" r="7.3" fill="#0f70d8" stroke="#e4ddd9" stroke-width="1.1"/><path d="M14.8 13.4Q17 11.6 20.5 12.2M19.8 10.6L21.8 12.3L19.7 13.8M21.8 17Q19.6 18.8 16.1 18.2M16.8 19.8L14.8 18.1L16.9 16.6" fill="none" stroke="#fff" stroke-width="1.5"/></svg>
<svg style="left:1677px;top:1155px" width="24" height="17"><path d="M0.6 6.3A16 16 0 0 1 23.4 6.3" fill="none" stroke="#9a9a9a" stroke-width="1.2"/><path d="M3.8 9.3A11.5 11.5 0 0 1 20.2 9.3M7 12.4A6.8 6.8 0 0 1 17 12.4" fill="none" stroke="#1b1b1b" stroke-width="1.6"/><circle cx="12" cy="15" r="1.5" fill="#1b1b1b"/></svg>
<svg style="left:1712px;top:1155px" width="25" height="18"><path d="M1 5.5H4.5L10.5 0.8V17.2L4.5 12.5H1Z" fill="none" stroke="#1b1b1b" stroke-width="1.4" stroke-linejoin="round"/><path d="M15.5 4.5L23.5 12.5M23.5 4.5L15.5 12.5" stroke="#1b1b1b" stroke-width="1.4"/></svg>
<svg style="left:1748px;top:1152px" width="26" height="20"><path d="M8.5 4.8H19Q21.3 4.8 21.3 7.1V16.4Q21.3 18.7 19 18.7H3.3Q1 18.7 1 16.4V10" fill="none" stroke="#1b1b1b" stroke-width="1.5"/><rect x="21.8" y="9" width="3.2" height="5.5" rx="1.2" fill="#1b1b1b"/><path d="M9.5 7.2H19V16.3H4.2Z" fill="#1b1b1b"/><path d="M6.8 0L2.6 8.6H5.6L4.2 14L9 6H6Z" fill="#1b1b1b"/></svg>
<div class="t" style="left:76.40px;top:27.89px;font-size:18.8px;color:#111111;transform:scaleX(0.9172);-webkit-text-stroke:0.25px #111111;">HELSINKI.mozmsgs</div>
<div class="t" style="left:472.40px;top:86.65px;font-size:21.2px;color:#1b1b1b;transform:scaleX(0.9284);">Profiles</div>
<div class="t" style="left:602.50px;top:86.65px;font-size:21.2px;color:#1b1b1b;transform:scaleX(0.9813);">m64p3p4s.default</div>
<div class="t" style="left:831.30px;top:86.65px;font-size:21.2px;color:#1b1b1b;transform:scaleX(1.0036);">Mail</div>
<div class="t" style="left:933.80px;top:86.65px;font-size:21.2px;color:#1b1b1b;transform:scaleX(0.9356);">Local Folders</div>
<div class="t" style="left:1116.60px;top:86.65px;font-size:21.2px;color:#1b1b1b;transform:scaleX(0.9187);">HELSINKI.mozmsgs</div>
<div class="t" style="left:1462.30px;top:86.75px;font-size:21.2px;color:#5d5d5d;transform:scaleX(0.9195);">Search HELSINKI.mozmsgs</div>
<div class="t" style="left:74.70px;top:162.36px;font-size:18.6px;color:#1b1b1b;transform:scaleX(0.9327);">New</div>
<div class="t" style="left:656.30px;top:162.46px;font-size:18.6px;color:#1b1b1b;transform:scaleX(0.9294);">Sort</div>
<div class="t" style="left:787.40px;top:162.46px;font-size:18.6px;color:#1b1b1b;transform:scaleX(0.9407);">View</div>
<div class="t" style="left:1823.00px;top:162.26px;font-size:18.6px;color:#1b1b1b;transform:scaleX(0.9201);">Details</div>
<div class="t" style="left:201.25px;top:217.26px;font-size:18.6px;color:#42546f;transform:scaleX(0.9141);">Name</div>
<div class="t" style="left:624.20px;top:217.06px;font-size:18.6px;color:#42546f;transform:scaleX(0.9762);">Date modified</div>
<div class="t" style="left:866.40px;top:217.06px;font-size:18.6px;color:#42546f;transform:scaleX(0.9054);">Type</div>
<div class="t" style="left:1069.20px;top:217.06px;font-size:18.6px;color:#42546f;transform:scaleX(0.8460);">Size</div>
<div class="t" style="left:211.60px;top:266.06px;font-size:18.6px;color:#111111;transform:scaleX(0.9853);">Admin.mozmsgs</div>
<div class="t" style="left:623.60px;top:266.06px;font-size:18.6px;color:#5f5f5f;transform:scaleX(0.9788);">22/10/2025 13:57</div>
<div class="t" style="left:866.40px;top:266.06px;font-size:18.6px;color:#5f5f5f;transform:scaleX(0.9493);">File folder</div>
<div class="t" style="left:211.60px;top:309.06px;font-size:18.6px;color:#111111;transform:scaleX(0.9948);">Admin.sbd</div>
<div class="t" style="left:623.60px;top:309.06px;font-size:18.6px;color:#5f5f5f;transform:scaleX(0.9883);">14/11/2025 13:13</div>
<div class="t" style="left:866.40px;top:309.06px;font-size:18.6px;color:#5f5f5f;transform:scaleX(0.9493);">File folder</div>
<div class="t" style="left:211.60px;top:352.06px;font-size:18.6px;color:#111111;transform:scaleX(0.9470);">Helsinki practical.sbd</div>
<div class="t" style="left:623.60px;top:352.06px;font-size:18.6px;color:#5f5f5f;transform:scaleX(0.9883);">14/11/2025 13:13</div>
<div class="t" style="left:866.40px;top:352.06px;font-size:18.6px;color:#5f5f5f;transform:scaleX(0.9493);">File folder</div>
<div class="t" style="left:211.60px;top:395.06px;font-size:18.6px;color:#111111;transform:scaleX(0.9850);">negotiations.sbd</div>
<div class="t" style="left:623.60px;top:395.06px;font-size:18.6px;color:#5f5f5f;transform:scaleX(0.9788);">22/10/2025 13:58</div>
<div class="t" style="left:866.40px;top:395.06px;font-size:18.6px;color:#5f5f5f;transform:scaleX(0.9493);">File folder</div>
<div class="t" style="left:211.60px;top:438.06px;font-size:18.6px;color:#111111;transform:scaleX(0.9294);">new research.sbd</div>
<div class="t" style="left:623.60px;top:438.06px;font-size:18.6px;color:#5f5f5f;transform:scaleX(0.9788);">22/10/2025 13:58</div>
<div class="t" style="left:866.40px;top:438.06px;font-size:18.6px;color:#5f5f5f;transform:scaleX(0.9493);">File folder</div>
<div class="t" style="left:211.60px;top:481.06px;font-size:18.6px;color:#111111;transform:scaleX(0.9253);">Public SEMINARS.mozmsgs</div>
<div class="t" style="left:623.60px;top:481.06px;font-size:18.6px;color:#5f5f5f;transform:scaleX(0.9788);">22/10/2025 13:58</div>
<div class="t" style="left:866.40px;top:481.06px;font-size:18.6px;color:#5f5f5f;transform:scaleX(0.9493);">File folder</div>
<div class="t" style="left:211.60px;top:524.06px;font-size:18.6px;color:#111111;transform:scaleX(0.9166);">Public SEMINARS.sbd</div>
<div class="t" style="left:623.60px;top:524.06px;font-size:18.6px;color:#5f5f5f;transform:scaleX(0.9883);">14/11/2025 13:13</div>
<div class="t" style="left:866.40px;top:524.06px;font-size:18.6px;color:#5f5f5f;transform:scaleX(0.9493);">File folder</div>
<div class="t" style="left:211.60px;top:567.06px;font-size:18.6px;color:#111111;transform:scaleX(0.8955);">RESEARCH.mozmsgs</div>
<div class="t" style="left:623.60px;top:567.06px;font-size:18.6px;color:#5f5f5f;transform:scaleX(0.9788);">22/10/2025 13:57</div>
<div class="t" style="left:866.40px;top:567.06px;font-size:18.6px;color:#5f5f5f;transform:scaleX(0.9493);">File folder</div>
<div class="t" style="left:211.60px;top:610.06px;font-size:18.6px;color:#111111;transform:scaleX(0.8695);">RESEARCH.sbd</div>
<div class="t" style="left:623.60px;top:610.06px;font-size:18.6px;color:#5f5f5f;transform:scaleX(0.9883);">14/11/2025 13:13</div>
<div class="t" style="left:866.40px;top:610.06px;font-size:18.6px;color:#5f5f5f;transform:scaleX(0.9493);">File folder</div>
<div class="t" style="left:211.60px;top:653.06px;font-size:18.6px;color:#111111;transform:scaleX(0.9345);">Teaching.sbd</div>
<div class="t" style="left:623.60px;top:653.06px;font-size:18.6px;color:#5f5f5f;transform:scaleX(0.9883);">14/11/2025 13:13</div>
<div class="t" style="left:866.40px;top:653.06px;font-size:18.6px;color:#5f5f5f;transform:scaleX(0.9493);">File folder</div>
<div class="t" style="left:211.60px;top:696.06px;font-size:18.6px;color:#111111;transform:scaleX(0.9072);">TEACHING_.mozmsgs</div>
<div class="t" style="left:623.60px;top:696.06px;font-size:18.6px;color:#5f5f5f;transform:scaleX(0.9788);">22/10/2025 13:57</div>
<div class="t" style="left:866.40px;top:696.06px;font-size:18.6px;color:#5f5f5f;transform:scaleX(0.9493);">File folder</div>
<div class="t" style="left:211.60px;top:739.06px;font-size:18.6px;color:#111111;transform:scaleX(0.8858);">TEACHING_.sbd</div>
<div class="t" style="left:623.60px;top:739.06px;font-size:18.6px;color:#5f5f5f;transform:scaleX(0.9883);">14/11/2025 13:13</div>
<div class="t" style="left:866.40px;top:739.06px;font-size:18.6px;color:#5f5f5f;transform:scaleX(0.9493);">File folder</div>
<div class="t" style="left:211.60px;top:782.06px;font-size:18.6px;color:#111111;transform:scaleX(0.9600);">travel.sbd</div>
<div class="t" style="left:623.60px;top:782.06px;font-size:18.6px;color:#5f5f5f;transform:scaleX(0.9788);">22/10/2025 13:58</div>
<div class="t" style="left:866.40px;top:782.06px;font-size:18.6px;color:#5f5f5f;transform:scaleX(0.9493);">File folder</div>
<div class="t" style="left:211.60px;top:825.06px;font-size:18.6px;color:#111111;transform:scaleX(0.8939);">TRAVEL_.mozmsgs</div>
<div class="t" style="left:623.60px;top:825.06px;font-size:18.6px;color:#5f5f5f;transform:scaleX(0.9788);">22/10/2025 13:57</div>
<div class="t" style="left:866.40px;top:825.06px;font-size:18.6px;color:#5f5f5f;transform:scaleX(0.9493);">File folder</div>
<div class="t" style="left:211.60px;top:868.06px;font-size:18.6px;color:#111111;transform:scaleX(0.8623);">TRAVEL_.sbd</div>
<div class="t" style="left:623.60px;top:868.06px;font-size:18.6px;color:#5f5f5f;transform:scaleX(0.9883);">14/11/2025 13:13</div>
<div class="t" style="left:866.40px;top:868.06px;font-size:18.6px;color:#5f5f5f;transform:scaleX(0.9493);">File folder</div>
<div class="t" style="left:34.80px;top:1090.06px;font-size:18.6px;color:#1f2d44;transform:scaleX(0.9334);">15 items</div>
<div class="t" style="left:1848.40px;top:1143.06px;font-size:18.6px;color:#1a1a1a;transform:scaleX(0.8940);">20:25</div>
<div class="t" style="left:1798.75px;top:1166.86px;font-size:18.6px;color:#1a1a1a;transform:scaleX(0.9805);">01/12/2025</div>
<div class="a" style="left:0;top:263px;width:99.5px;height:30px;overflow:hidden"><div class="t" style="left:91.80px;top:4.26px;font-size:18.6px;color:#1b1b1b;transform:scaleX(0.8600)">Desktop</div></div>
<div class="a" style="left:0;top:311px;width:99.5px;height:30px;overflow:hidden"><div class="t" style="left:91.80px;top:4.26px;font-size:18.6px;color:#1b1b1b;transform:scaleX(0.8600)">Downloads</div></div>
<div class="a" style="left:0;top:359px;width:99.5px;height:30px;overflow:hidden"><div class="t" style="left:91.80px;top:4.26px;font-size:18.6px;color:#1b1b1b;transform:scaleX(0.8600)">Documents</div></div>
<div class="a" style="left:0;top:407px;width:99.5px;height:30px;overflow:hidden"><div class="t" style="left:91.80px;top:4.26px;font-size:18.6px;color:#1b1b1b;transform:scaleX(0.8600)">Pictures</div></div>
<div class="a" style="left:0;top:455px;width:99.5px;height:30px;overflow:hidden"><div class="t" style="left:91.80px;top:4.26px;font-size:18.6px;color:#1b1b1b;transform:scaleX(0.8600)">Music</div></div>
<div class="a" style="left:0;top:503px;width:99.5px;height:30px;overflow:hidden"><div class="t" style="left:91.80px;top:4.26px;font-size:18.6px;color:#1b1b1b;transform:scaleX(0.8600)">Videos</div></div>
<div class="a" style="left:0;top:551px;width:99.5px;height:30px;overflow:hidden"><div class="t" style="left:91.80px;top:4.26px;font-size:18.6px;color:#1b1b1b;transform:scaleX(0.8600)">2025</div></div>
<div class="a" style="left:0;top:599px;width:99.5px;height:30px;overflow:hidden"><div class="t" style="left:91.80px;top:4.26px;font-size:18.6px;color:#1b1b1b;transform:scaleX(0.8600)">notes</div></div>
<div class="a" style="left:0;top:647px;width:123px;height:30px;overflow:hidden"><div class="t" style="left:91.80px;top:4.26px;font-size:18.6px;color:#1b1b1b;transform:scaleX(0.8600)">Case studies</div></div>
<div class="a" style="left:0;top:695px;width:123px;height:30px;overflow:hidden"><div class="t" style="left:91.80px;top:4.26px;font-size:18.6px;color:#1b1b1b;transform:scaleX(0.8600)">Thunderbird</div></div>
<div class="a" style="left:0;top:792px;width:123px;height:30px;overflow:hidden"><div class="t" style="left:91.30px;top:4.26px;font-size:18.6px;color:#1b1b1b;transform:scaleX(0.8600)">This PC</div></div>
<div class="a" style="left:0;top:840px;width:123px;height:30px;overflow:hidden"><div class="t" style="left:103.30px;top:4.26px;font-size:18.6px;color:#1b1b1b;transform:scaleX(0.8600)">Windows (C:)</div></div>
<div class="a" style="left:0;top:888px;width:123px;height:30px;overflow:hidden"><div class="t" style="left:103.30px;top:4.26px;font-size:18.6px;color:#1b1b1b;transform:scaleX(0.8600)">Group</div></div>
<div class="a" style="left:0;top:936px;width:123px;height:30px;overflow:hidden"><div class="t" style="left:103.30px;top:4.26px;font-size:18.6px;color:#1b1b1b;transform:scaleX(0.8600)">steve</div></div>
<div class="a" style="left:0;top:984px;width:123px;height:30px;overflow:hidden"><div class="t" style="left:92.30px;top:4.26px;font-size:18.6px;color:#1b1b1b;transform:scaleX(0.8600)">Network</div></div>

</body></html>
